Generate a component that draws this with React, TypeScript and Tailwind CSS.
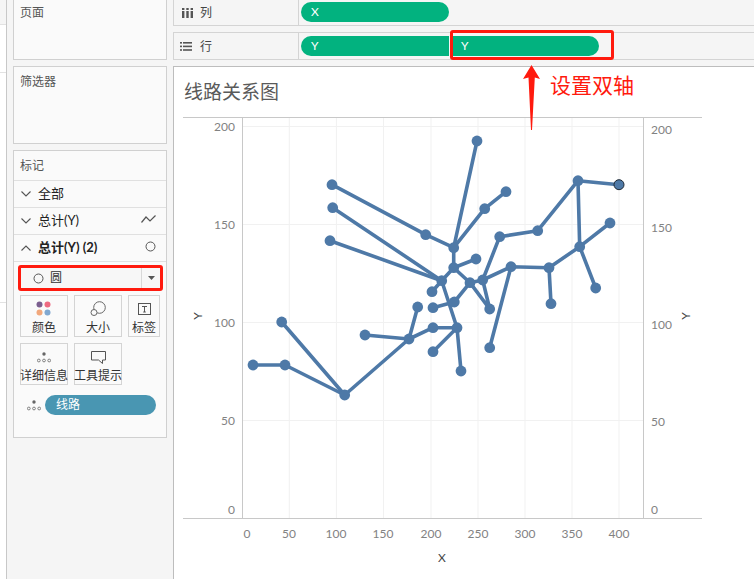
import React from "react";

type P = [number, number];
const seg: P[][] = [
  [[332, 184.7], [425.7, 234.7], [453.7, 247.7]],
  [[453.7, 247.7], [477, 141]],
  [[453.7, 247.7], [484.7, 208.7], [506, 191.7]],
  [[453.7, 247.7], [453.7, 267.7], [476, 259]],
  [[453.7, 267.7], [441.7, 280.7], [432, 291.7]],
  [[453.7, 267.7], [470, 282.7]],
  [[332.7, 207.7], [441.7, 280.7]],
  [[330, 240.7], [441.7, 280.7], [457, 327.7]],
  [[470, 282.7], [454.3, 302], [433, 307.7]],
  [[470, 282.7], [482.7, 280], [489.7, 309], [470, 282.7]],
  [[482.7, 280], [499.7, 236.7], [537.7, 230.7], [578, 180.7], [619, 184.7]],
  [[578, 180.7], [579.7, 246.7]],
  [[482.7, 280], [511, 266.7], [549, 267.7], [579.7, 246.7], [610, 223]],
  [[579.7, 246.7], [595.7, 288]],
  [[549, 267.7], [551, 303.7]],
  [[511, 266.7], [489.7, 347.7]],
  [[457, 327.7], [433, 327.7], [409, 339]],
  [[457, 327.7], [433, 351.7]],
  [[457, 327.7], [461, 371]],
  [[409, 339], [417.7, 307]],
  [[409, 339], [365, 335]],
  [[409, 339], [344.7, 395], [281.7, 322]],
  [[344.7, 395], [285, 365], [253, 365]],
];
const dots: P[] = [
  [332, 184.7], [332.7, 207.7], [330, 240.7], [425.7, 234.7], [453.7, 247.7], [453.7, 267.7], [441.7, 280.7],
  [432, 291.7], [454.3, 302], [433, 307.7], [417.7, 307], [457, 327.7], [433, 327.7], [409, 339], [365, 335],
  [433, 351.7], [461, 371], [281.7, 322], [253, 365], [285, 365], [344.7, 395], [477, 141], [506, 191.7],
  [484.7, 208.7], [476, 259], [470, 282.7], [482.7, 280], [499.7, 236.7], [537.7, 230.7], [578, 180.7],
  [610, 223], [579.7, 246.7], [511, 266.7], [549, 267.7], [551, 303.7], [595.7, 288], [489.7, 309], [489.7, 347.7],
];
const gridX = [289.3, 336.4, 383.5, 431, 478, 525, 572, 619];
const gridY = [126, 224, 322, 420];
const xLabels: [string, number][] = [["0", 247], ["50", 289], ["100", 336], ["150", 383], ["200", 431], ["250", 478], ["300", 525], ["350", 572], ["400", 619]];
const leftLabels: [string, number][] = [["200", 131], ["150", 229], ["100", 327], ["50", 425], ["0", 514]];
const rightLabels: [string, number][] = [["200", 134], ["150", 232], ["100", 329], ["50", 426], ["0", 514]];
const LATIN = "font-['Lato','Noto_Sans_CJK_SC',sans-serif]";

const Chev = ({ up }: { up?: boolean }) => (
  <svg width="10" height="6" viewBox="0 0 10 6" fill="none" stroke="#555" strokeWidth="1.1" className="mr-[7px] shrink-0">
    <path d={up ? "M0.5 5.5 L5 1 L9.5 5.5" : "M0.5 0.5 L5 5 L9.5 0.5"} />
  </svg>
);

const DetailIcon = () => (
  <svg width="14" height="11" viewBox="0 0 14 11" fill="none">
    <circle cx="7" cy="2" r="1.7" fill="#666" />
    <circle cx="1.8" cy="8.5" r="1.4" stroke="#666" strokeWidth="0.8" />
    <circle cx="7" cy="8.5" r="1.4" stroke="#666" strokeWidth="0.8" />
    <circle cx="12.2" cy="8.5" r="1.4" stroke="#666" strokeWidth="0.8" />
  </svg>
);

const MarkBtn = ({ w, label, children }: { w: string; label: string; children: React.ReactNode }) => (
  <div className={`${w} h-[42px] border border-[#d4d4d4] flex flex-col items-center`}>
    <div className="h-[24px] flex items-center justify-center mt-[1px]">{children}</div>
    <div className="text-[12px] leading-[14px] text-[#333] whitespace-nowrap">{label}</div>
  </div>
);

const Row = ({ up, bold, size, label, icon }: { up?: boolean; bold?: boolean; size: string; label: string; icon?: React.ReactNode }) => (
  <div className={`h-[27px] border-b border-[#e0e0e0] flex items-center pl-[7px] pr-[10px] ${size} text-[#222] ${bold ? "font-bold" : ""}`}>
    <Chev up={up} />
    <span className="flex-1 whitespace-nowrap">{label}</span>
    <span className="mb-[4px] flex">{icon}</span>
  </div>
);

export default function App() {
  return (
    <div className={`relative w-[754px] h-[579px] overflow-hidden flex bg-[#f5f5f5] ${LATIN}`}>
      {/* far-left sliver */}
      <div className="w-[7px] h-full border-r border-[#c8c8c8] flex flex-col">
        <div className="h-[25px] border-b border-[#e2e2e2] bg-[#f5f5f5]" />
        <div className="h-[48px] border-b border-[#e2e2e2] bg-white" />
        <div className="h-[230px] border-b border-[#e2e2e2] bg-white" />
        <div className="flex-1 bg-white" />
      </div>

      {/* sidebar */}
      <div className="w-[166px] h-full pl-[6px] pr-[6px] flex flex-col gap-[6px] text-[#555] text-[12px]">
        <div className="h-[60px] border border-t-0 border-[#d0d0d0] bg-[#fafafa] px-[6px] pt-[5px] leading-[16px]">页面</div>
        <div className="h-[78px] border border-[#d0d0d0] bg-[#fafafa] px-[6px] pt-[7px] leading-[16px]">筛选器</div>
        <div className="h-[288px] border border-[#d0d0d0] bg-[#fafafa] flex flex-col">
          <div className="h-[30px] border-b border-[#e0e0e0] px-[6px] flex items-center">标记</div>
          <Row size="text-[13px]" label="全部" />
          <Row
            size="text-[13px]"
            label="总计(Y)"
            icon={
              <svg width="15" height="8" viewBox="0 0 15 8" fill="none" stroke="#555" strokeWidth="1.2">
                <path d="M0.5 7.5 L5 2 L9 6 L14.5 0.5" />
              </svg>
            }
          />
          <Row
            up
            bold
            size="text-[13px]"
            label="总计(Y) (2)"
            icon={
              <svg width="11" height="11" viewBox="0 0 11 11" fill="none" stroke="#555" strokeWidth="1">
                <circle cx="5.5" cy="5.5" r="4.5" />
              </svg>
            }
          />
          <div className="ml-[4px] mr-[3px] mt-[3px] h-[26px] border-[3px] border-[#ff1a0e] rounded-[3px] bg-[#f7f7f7] flex items-center">
            <svg width="11" height="11" viewBox="0 0 11 11" fill="none" stroke="#555" strokeWidth="1" className="ml-[12px] mr-[6px]">
              <circle cx="5.5" cy="5.5" r="4.5" />
            </svg>
            <span className="flex-1 text-[12px] text-[#333]">圆</span>
            <div className="w-[19px] h-full border-l border-[#d8d8d8] flex items-center justify-center">
              <svg width="7" height="4" viewBox="0 0 7 4"><path d="M0 0 H7 L3.5 4 Z" fill="#555" /></svg>
            </div>
          </div>
          <div className="flex gap-[6px] pl-[6px] mt-[4px]">
            <MarkBtn w="w-[48px]" label="颜色">
              <svg width="16" height="16" viewBox="0 0 16 16">
                <circle cx="3.5" cy="3.5" r="3" fill="#7b5f8f" />
                <circle cx="11.5" cy="3.5" r="3" fill="#ee6a82" />
                <circle cx="3.5" cy="11.5" r="3" fill="#f2a87c" />
                <circle cx="11.5" cy="11.5" r="3" fill="#81a8d0" />
              </svg>
            </MarkBtn>
            <MarkBtn w="w-[48px]" label="大小">
              <svg width="16" height="16" viewBox="0 0 16 16" fill="none" stroke="#666" strokeWidth="1">
                <circle cx="9.5" cy="6.5" r="5.8" />
                <circle cx="4" cy="11.5" r="3" fill="#fafafa" />
              </svg>
            </MarkBtn>
            <MarkBtn w="w-[32px]" label="标签">
              <svg width="13" height="12" viewBox="0 0 13 12" fill="none" stroke="#555" strokeWidth="1">
                <rect x="0.5" y="0.5" width="12" height="11" />
                <path d="M4 3.5 H9 M6.5 3.5 V9 M5.2 9 H7.8" />
              </svg>
            </MarkBtn>
          </div>
          <div className="flex gap-[6px] pl-[6px] mt-[6px]">
            <MarkBtn w="w-[48px]" label="详细信息"><DetailIcon /></MarkBtn>
            <MarkBtn w="w-[48px]" label="工具提示">
              <svg width="15" height="13" viewBox="0 0 15 13" fill="none" stroke="#555" strokeWidth="1">
                <path d="M0.5 0.5 H14.5 V9 H11.5 V12.5 L7.5 9 H0.5 Z" />
              </svg>
            </MarkBtn>
          </div>
          <div className="flex items-center mt-[10px] pl-[13px]">
            <DetailIcon />
            <div className="ml-[4px] w-[111px] h-[20px] rounded-full bg-[#4996b2] text-white text-[12px] leading-[20px] pl-[11px]">线路</div>
          </div>
        </div>
      </div>

      {/* main */}
      <div className="flex-1 min-w-0 h-full flex flex-col gap-[6px]">
        <div className="h-[26px] border-b border-l border-[#d4d4d4] flex">
          <div className="w-[125px] border-r border-[#d4d4d4] flex items-center pl-[8px] text-[12px] text-[#444]">
            <svg width="11" height="10" viewBox="0 0 11 10" fill="#555" className="mr-[7px]">
              <rect x="0" y="0" width="2.4" height="2" /><rect x="0" y="3" width="2.4" height="7" />
              <rect x="4.3" y="0" width="2.4" height="2" /><rect x="4.3" y="3" width="2.4" height="7" />
              <rect x="8.6" y="0" width="2.4" height="2" /><rect x="8.6" y="3" width="2.4" height="7" />
            </svg>
            列
          </div>
          <div className="pl-[2px] pt-[2px]">
            <div className="w-[148px] h-[20px] rounded-full bg-[#02b27f] text-white text-[12px] leading-[20px] pl-[10px]">X</div>
          </div>
        </div>
        <div className="h-[28px] border-y border-l border-[#d4d4d4] flex">
          <div className="w-[125px] border-r border-[#d4d4d4] flex items-center pl-[6px] pt-[2px] text-[12px] text-[#444]">
            <svg width="12" height="9" viewBox="0 0 12 9" fill="#555" className="mr-[8px] mb-[2px]">
              <rect x="0" y="0" width="2" height="1.6" /><rect x="3" y="0" width="9" height="1.6" />
              <rect x="0" y="3.6" width="2" height="1.6" /><rect x="3" y="3.6" width="9" height="1.6" />
              <rect x="0" y="7.2" width="2" height="1.6" /><rect x="3" y="7.2" width="9" height="1.6" />
            </svg>
            行
          </div>
          <div className="pl-[2px] pt-[3px] flex gap-[2px]">
            <div className="w-[148px] h-[20px] rounded-l-full bg-[#02b27f] text-white text-[12px] leading-[20px] pl-[10px]">Y</div>
            <div className="w-[148px] h-[20px] rounded-r-full bg-[#02b27f] text-white text-[12px] leading-[20px] pl-[10px]">Y</div>
          </div>
        </div>
        <div className="flex-1 min-h-0 border-t border-l border-[#bdbdbd] bg-white flex flex-col">
          <div className="h-[50px] pl-[10px] pt-[13px] text-[19px] leading-[24px] text-[#5a5a5a]">线路关系图</div>
          <svg width="580" height="462" viewBox="174 117 580 462" className="block">
            {gridX.map((x) => <line key={x} x1={x} x2={x} y1={117} y2={518} stroke="#f1f1f1" />)}
            {gridY.map((y) => <line key={y} x1={242} x2={643} y1={y + 0.5} y2={y + 0.5} stroke="#f1f1f1" />)}
            <line x1={183} x2={702} y1={117.5} y2={117.5} stroke="#c8c8c8" />
            <line x1={183} x2={702} y1={518.5} y2={518.5} stroke="#c8c8c8" />
            <line x1={242.5} x2={242.5} y1={117} y2={518} stroke="#c8c8c8" />
            <line x1={643.5} x2={643.5} y1={117} y2={518} stroke="#c8c8c8" />
            <g fill="none" stroke="#4e79a7" strokeWidth="3.6" strokeLinejoin="round" strokeLinecap="round">
              {seg.map((s, i) => <polyline key={i} points={s.map((p) => p.join(",")).join(" ")} />)}
            </g>
            {dots.map(([x, y], i) => <circle key={i} cx={x} cy={y} r="5.4" fill="#4e79a7" />)}
            <circle cx={619} cy={184.7} r="5" fill="#4e79a7" stroke="#1f2a36" strokeWidth="1" />
            <g fontSize="12" fill="#828282" fontFamily="Lato, sans-serif">
              {leftLabels.map(([t, y]) => <text key={t} x={235} y={y} textAnchor="end">{t}</text>)}
              {rightLabels.map(([t, y]) => <text key={t} x={651} y={y}>{t}</text>)}
              {xLabels.map(([t, x]) => <text key={t} x={x} y={538} textAnchor="middle">{t}</text>)}
            </g>
            <g fontSize="12" fill="#444" fontFamily="Lato, sans-serif">
              <text x={442} y={562} textAnchor="middle">X</text>
              <text transform="translate(202 316) rotate(-90)" textAnchor="middle">Y</text>
              <text transform="translate(690 316) rotate(-90)" textAnchor="middle">Y</text>
            </g>
          </svg>
        </div>
      </div>

      {/* red annotation overlay */}
      <div className="absolute left-[450px] top-[30px] w-[164px] h-[30px] border-[3px] border-[#ff1a0e] rounded-[3px]" />
      <svg className="absolute left-[522px] top-[64px]" width="20" height="68" viewBox="0 0 20 68">
        <path d="M9.5 1 L18 15 L12.8 13.5 L10 66 L9 66 L6.5 13.5 L1 15 Z" fill="#ff1a0e" />
      </svg>
      <div className="absolute left-[550px] top-[71px] text-[21px] leading-[28px] text-[#ff1a0e] whitespace-nowrap">设置双轴</div>
    </div>
  );
}
